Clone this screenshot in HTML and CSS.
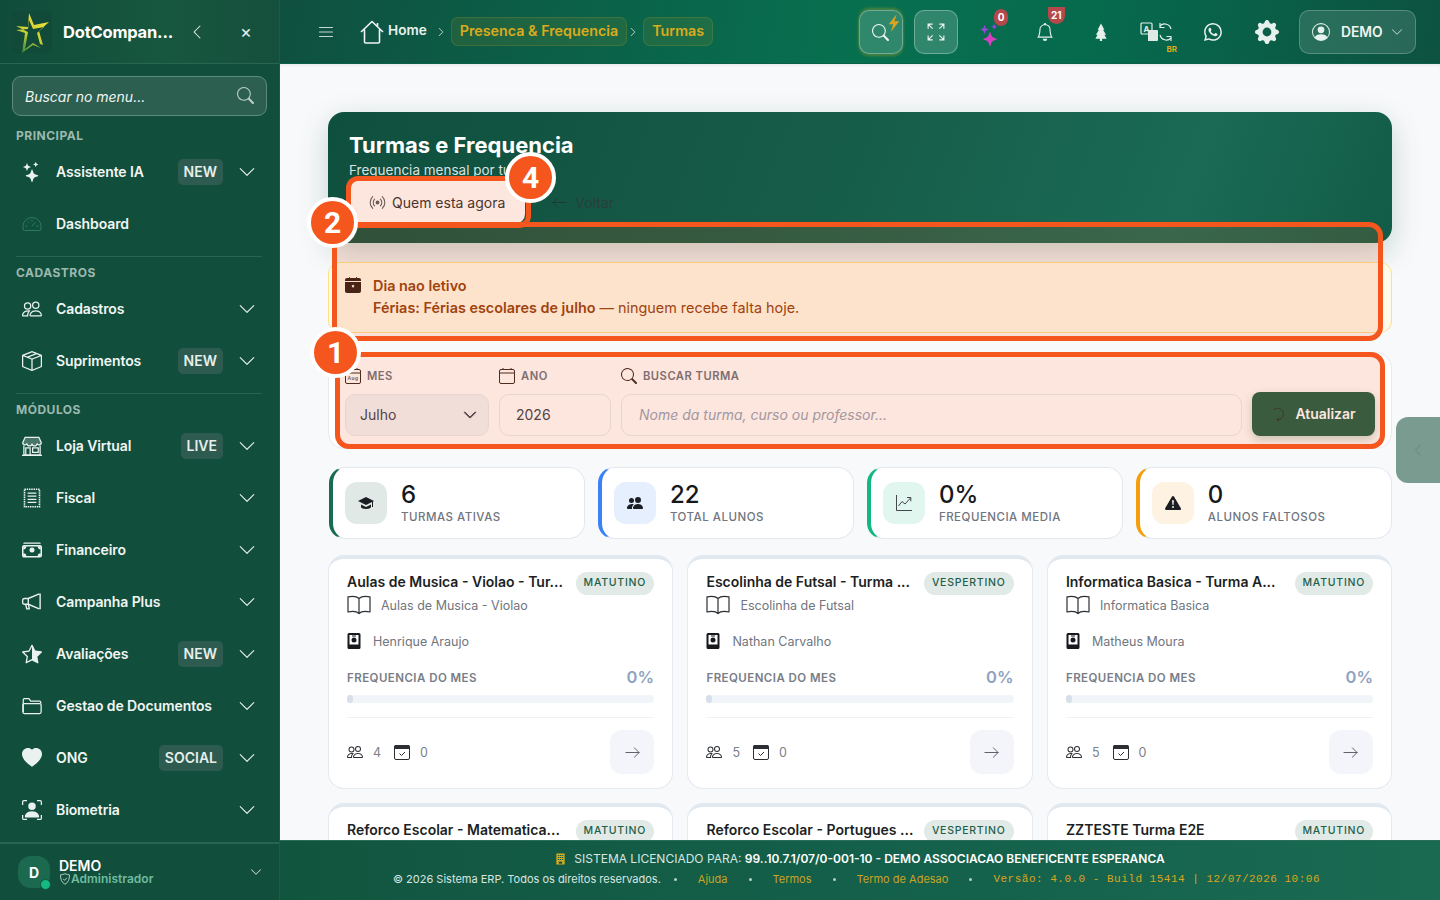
FILE: index.html
```html
<!DOCTYPE html>
<html lang="pt-BR">
<head>
<meta charset="utf-8">
<title>Turmas e Frequencia</title>
<link rel="stylesheet" href="styles.css">
</head>
<body>
<svg class="defs" aria-hidden="true">
  <defs>
    <linearGradient id="lg" x1="0.7" y1="0" x2="0.2" y2="1"><stop offset="0" stop-color="#f2e23a"/><stop offset="0.55" stop-color="#c8cf35"/><stop offset="1" stop-color="#2f8a3c"/></linearGradient>
  </defs>
  <symbol id="chev-d" viewBox="0 0 16 16"><path fill="currentColor" d="M1.646 4.646a.5.5 0 0 1 .708 0L8 10.293l5.646-5.647a.5.5 0 0 1 .708.708l-6 6a.5.5 0 0 1-.708 0l-6-6a.5.5 0 0 1 0-.708z"/></symbol>
  <symbol id="chev-l" viewBox="0 0 16 16"><path fill="currentColor" d="M11.354 1.646a.5.5 0 0 1 0 .708L5.707 8l5.647 5.646a.5.5 0 0 1-.708.708l-6-6a.5.5 0 0 1 0-.708l6-6a.5.5 0 0 1 .708 0z"/></symbol>
  <symbol id="chev-r" viewBox="0 0 16 16"><path fill="currentColor" d="M4.646 1.646a.5.5 0 0 1 .708 0l6 6a.5.5 0 0 1 0 .708l-6 6a.5.5 0 0 1-.708-.708L10.293 8 4.646 2.354a.5.5 0 0 1 0-.708z"/></symbol>
  <symbol id="search" viewBox="0 0 16 16"><path fill="currentColor" d="M11.742 10.344a6.5 6.5 0 1 0-1.397 1.398h-.001c.03.04.062.078.098.115l3.85 3.85a1 1 0 0 0 1.415-1.414l-3.85-3.85a1.007 1.007 0 0 0-.115-.1zM12 6.5a5.5 5.5 0 1 1-11 0 5.5 5.5 0 0 1 11 0z"/></symbol>
  <symbol id="stars" viewBox="0 0 16 16"><path fill="currentColor" d="M7.657 6.247c.11-.33.576-.33.686 0l.645 1.937a2.89 2.89 0 0 0 1.829 1.828l1.936.645c.33.11.33.576 0 .686l-1.937.645a2.89 2.89 0 0 0-1.828 1.829l-.645 1.936a.361.361 0 0 1-.686 0l-.645-1.937a2.89 2.89 0 0 0-1.828-1.828l-1.937-.645a.361.361 0 0 1 0-.686l1.937-.645a2.89 2.89 0 0 0 1.828-1.828l.645-1.937zM3.794 1.148a.217.217 0 0 1 .412 0l.387 1.162c.173.518.579.924 1.097 1.097l1.162.387a.217.217 0 0 1 0 .412l-1.162.387A1.734 1.734 0 0 0 4.593 5.69l-.387 1.162a.217.217 0 0 1-.412 0L3.407 5.69A1.734 1.734 0 0 0 2.31 4.593l-1.162-.387a.217.217 0 0 1 0-.412l1.162-.387A1.734 1.734 0 0 0 3.407 2.31l.387-1.162zM10.863.099a.145.145 0 0 1 .274 0l.258.774c.115.346.386.617.732.732l.774.258a.145.145 0 0 1 0 .274l-.774.258a1.156 1.156 0 0 0-.732.732l-.258.774a.145.145 0 0 1-.274 0l-.258-.774a1.156 1.156 0 0 0-.732-.732L9.1 2.137a.145.145 0 0 1 0-.274l.774-.258c.346-.115.617-.386.732-.732L10.863.1z"/></symbol>
  <symbol id="spark" viewBox="0 0 16 16"><path fill="#d63fc2" d="M7.657 6.247c.11-.33.576-.33.686 0l.645 1.937a2.89 2.89 0 0 0 1.829 1.828l1.936.645c.33.11.33.576 0 .686l-1.937.645a2.89 2.89 0 0 0-1.828 1.829l-.645 1.936a.361.361 0 0 1-.686 0l-.645-1.937a2.89 2.89 0 0 0-1.828-1.828l-1.937-.645a.361.361 0 0 1 0-.686l1.937-.645a2.89 2.89 0 0 0 1.828-1.828l.645-1.937z"/><path fill="#9a45dc" d="M3.794 1.148a.217.217 0 0 1 .412 0l.387 1.162c.173.518.579.924 1.097 1.097l1.162.387a.217.217 0 0 1 0 .412l-1.162.387A1.734 1.734 0 0 0 4.593 5.69l-.387 1.162a.217.217 0 0 1-.412 0L3.407 5.69A1.734 1.734 0 0 0 2.31 4.593l-1.162-.387a.217.217 0 0 1 0-.412l1.162-.387A1.734 1.734 0 0 0 3.407 2.31l.387-1.162zM10.863.099a.145.145 0 0 1 .274 0l.258.774c.115.346.386.617.732.732l.774.258a.145.145 0 0 1 0 .274l-.774.258a1.156 1.156 0 0 0-.732.732l-.258.774a.145.145 0 0 1-.274 0l-.258-.774a1.156 1.156 0 0 0-.732-.732L9.1 2.137a.145.145 0 0 1 0-.274l.774-.258c.346-.115.617-.386.732-.732L10.863.1z"/></symbol>
  <symbol id="speed" viewBox="0 0 20 16"><g fill="none" stroke="currentColor" stroke-width="1"><path d="M2.5 14.5h15a1.5 1.5 0 0 0 1.5-1.500V10a9 8.500 0 0 0-18 0v3a1.500 1.500 0 0 0 1.500 1.500z"/><path d="M10 10l3.500-4M3.500 10h2M14.500 10h2M10 3.500v2M5.500 5.500l1.200 1.200"/></g></symbol>
  <symbol id="people" viewBox="0 0 16 16"><path fill="currentColor" d="M15 14s1 0 1-1-1-4-5-4-5 3-5 4 1 1 1 1h8Zm-7.978-1A.261.261 0 0 1 7 12.996c.001-.264.167-1.03.76-1.72C8.312 10.629 9.282 10 11 10c1.717 0 2.687.63 3.24 1.276.593.69.758 1.457.76 1.72l-.008.002a.274.274 0 0 1-.014.002H7.022ZM11 7a2 2 0 1 0 0-4 2 2 0 0 0 0 4Zm3-2a3 3 0 1 1-6 0 3 3 0 0 1 6 0ZM6.936 9.28a5.88 5.88 0 0 0-1.23-.247A7.35 7.35 0 0 0 5 9c-4 0-5 3-5 4 0 .667.333 1 1 1h4.216A2.238 2.238 0 0 1 5 13c0-1.01.377-2.042 1.09-2.904.243-.294.526-.569.846-.816ZM4.92 10A5.493 5.493 0 0 0 4 13H1c0-.26.164-1.03.76-1.724.545-.636 1.492-1.256 3.16-1.275ZM1.5 5.500a3 3 0 1 1 6 0 3 3 0 0 1-6 0Zm3-2a2 2 0 1 0 0 4 2 2 0 0 0 0-4Z"/></symbol>
  <symbol id="people-fill" viewBox="0 0 16 16"><path fill="currentColor" d="M7 14s-1 0-1-1 1-4 5-4 5 3 5 4-1 1-1 1H7Zm4-6a3 3 0 1 0 0-6 3 3 0 0 0 0 6Zm-5.784 6A2.238 2.238 0 0 1 5 13c0-1.355.68-2.750 1.936-3.720A6.325 6.325 0 0 0 5 9c-4 0-5 3-5 4s1 1 1 1h4.216ZM4.500 8a2.500 2.500 0 1 0 0-5 2.500 2.500 0 0 0 0 5Z"/></symbol>
  <symbol id="box" viewBox="0 0 16 16"><path fill="currentColor" d="M8.186 1.113a.5.5 0 0 0-.372 0L1.846 3.5l2.404.961L10.404 2l-2.218-.887zm3.564 1.426L5.596 5 8 5.961 14.154 3.5l-2.404-.961zm3.250 1.700-6.500 2.600v7.922l6.500-2.600V4.240zM7.5 14.762V6.838L1 4.239v7.925l6.500 2.600zM7.443.184a1.500 1.500 0 0 1 1.114 0l7.129 2.852A.5.5 0 0 1 16 3.500v8.662a1 1 0 0 1-.629.928l-7.185 2.874a.5.5 0 0 1-.372 0L.63 13.090a1 1 0 0 1-.63-.928V3.500a.5.5 0 0 1 .314-.464L7.443.184z"/></symbol>
  <symbol id="shop" viewBox="0 0 16 16"><g fill="none" stroke="currentColor" stroke-width="1"><path d="M2.500 1h11l2 4.500a1.800 1.800 0 0 1-3.500.400 2 2 0 0 1-4 0 2 2 0 0 1-4 0 1.800 1.800 0 0 1-3.500-.400z" fill="currentColor" fill-opacity=".25"/><path d="M1.500 7.500V15h13V7.500M0 15.500h16"/><path d="M3 15V9.500h3.500V15M8.500 9.500h4.500v3.500H8.500z"/></g></symbol>
  <symbol id="receipt" viewBox="0 0 16 16"><g fill="none" stroke="currentColor"><path d="M2 1h12v14H2z" stroke-width="1.300" stroke-dasharray="1.200 .6"/><path d="M4.500 4h7M4.500 6.500h7M4.500 9h7M4.500 11.500h7" stroke-width="1"/></g></symbol>
  <symbol id="cash" viewBox="0 0 16 16"><path fill="currentColor" d="M1 3a1 1 0 0 1 1-1h12a1 1 0 0 1 1 1H1zM8 10a2 2 0 1 0 0-4 2 2 0 0 0 0 4z"/><rect x=".6" y="4.600" width="14.800" height="8.800" rx="1" fill="none" stroke="currentColor" stroke-width="1.200"/><path fill="currentColor" d="M1 5h2.500A2.500 2.500 0 0 1 1 7.500zM15 5h-2.500A2.500 2.500 0 0 0 15 7.500zM1 13h2.500A2.500 2.500 0 0 0 1 10.500zM15 13h-2.500a2.500 2.500 0 0 1 2.500-2.500z"/></symbol>
  <symbol id="mega" viewBox="0 0 16 16"><g fill="none" stroke="currentColor" stroke-width="1.100" stroke-linejoin="round"><path d="M14.500 1.200v12.600M13.800 1.500 5 5.200H2a1.500 1.500 0 0 0-1.500 1.500v1.600A1.500 1.500 0 0 0 2 9.800h3l8.800 3.700"/><path d="M5 5.200v4.600M3 10l.8 3.500h2L5.200 10.200"/></g></symbol>
  <symbol id="star-half" viewBox="0 0 16 16"><path fill="currentColor" d="M5.354 5.119 7.538.792A.516.516 0 0 1 8 .5c.183 0 .366.097.465.292l2.184 4.327 4.898.696A.537.537 0 0 1 16 6.320a.548.548 0 0 1-.17.445l-3.523 3.356.83 4.730c.078.443-.36.79-.746.592L8 13.187l-4.389 2.256a.52.52 0 0 1-.146.05c-.342.06-.668-.254-.6-.642l.83-4.730L.173 6.765a.55.55 0 0 1-.172-.403.58.58 0 0 1 .085-.302.513.513 0 0 1 .37-.245l4.898-.696zM8 12.027a.5.5 0 0 1 .232.056l3.686 1.894-.694-3.957a.565.565 0 0 1 .162-.505l2.907-2.770-4.052-.576a.525.525 0 0 1-.393-.288L8.001 2.223 8 2.226v9.800z" transform="matrix(-1 0 0 1 16 0)"/></symbol>
  <symbol id="folder" viewBox="0 0 16 16"><g fill="none" stroke="currentColor" stroke-width="1"><path d="M1 13V3a1 1 0 0 1 1-1h3.500l1.500 2h7a1 1 0 0 1 1 1v1"/><rect x=".7" y="6" width="14.600" height="8" rx="1.200"/></g></symbol>
  <symbol id="heart" viewBox="0 0 16 16"><path fill="currentColor" d="M8 1.314C12.438-3.248 23.534 4.735 8 15-7.534 4.736 3.562-3.248 8 1.314z"/></symbol>
  <symbol id="bio" viewBox="0 0 16 16"><path fill="none" stroke="currentColor" stroke-width="1" d="M.5 4V1.500a1 1 0 0 1 1-1H4M12 .5h2.500a1 1 0 0 1 1 1V4M15.500 12v2.500a1 1 0 0 1-1 1H12M4 15.500H1.500a1 1 0 0 1-1-1V12"/><path fill="currentColor" d="M8 8a3 3 0 1 0 0-6 3 3 0 0 0 0 6zM2.800 14s-.5 0-.5-1 1.500-4 5.700-4 5.700 3 5.700 4-.5 1-.5 1z"/></symbol>
  <symbol id="shield" viewBox="0 0 16 16"><g fill="none" stroke="currentColor" stroke-width="1.100"><path d="M8 1C6 1.800 4 2.300 2 2.500c0 6 1.500 10 6 12.500 4.500-2.500 6-6.500 6-12.500-2-.2-4-.7-6-1.500z"/><path d="m5.500 7.800 2 2 3-3.500"/></g></symbol>
  <symbol id="list" viewBox="0 0 16 16"><path fill="none" stroke="currentColor" stroke-width="1.100" stroke-linecap="round" d="M1.500 3.500h13M1.500 8h13M1.500 12.500h13"/></symbol>
  <symbol id="house" viewBox="0 0 24 24"><path fill="none" stroke="currentColor" stroke-width="1.600" stroke-linejoin="round" d="M1 12 12 1.500 23 12M4.500 9.500V22a1 1 0 0 0 1 1h13a1 1 0 0 0 1-1V9.500M17.500 3v3"/></symbol>
  <symbol id="bolt" viewBox="0 0 16 20"><path fill="currentColor" d="M11 0 2 11.500h5L4.500 20 14 8H8.500z"/></symbol>
  <symbol id="expand" viewBox="0 0 16 16"><path fill="none" stroke="currentColor" stroke-width="1" d="M1 5V1h4M1 1l4 4M11 1h4v4M15 1l-4 4M1 11v4h4M1 15l4-4M15 11v4h-4M15 15l-4-4"/></symbol>
  <symbol id="bell" viewBox="0 0 16 16"><path fill="currentColor" d="M8 16a2 2 0 0 0 2-2H6a2 2 0 0 0 2 2zM8 1.918l-.797.161A4.002 4.002 0 0 0 4 6c0 .628-.134 2.197-.459 3.742-.16.767-.376 1.566-.663 2.258h10.244c-.287-.692-.502-1.490-.663-2.258C12.134 8.197 12 6.628 12 6a4.002 4.002 0 0 0-3.203-3.920L8 1.917zM14.220 12c.223.447.481.801.78 1H1c.299-.199.557-.553.78-1C2.680 10.200 3 6.880 3 6c0-2.420 1.720-4.440 4.005-4.901a1 1 0 1 1 1.990 0A5.002 5.002 0 0 1 13 6c0 .88.32 4.200 1.220 6z"/></symbol>
  <symbol id="tree" viewBox="0 0 16 16"><path fill="currentColor" d="M8 .5 11 6H9.800l2.700 4.500H11l2 3.500H9v2H7v-2H3l2-3.500H3.500L6.200 6H5z"/></symbol>
  <symbol id="whatsapp" viewBox="0 0 16 16"><path fill="currentColor" d="M13.601 2.326A7.854 7.854 0 0 0 7.994 0C3.627 0 .068 3.558.064 7.926c0 1.399.366 2.760 1.057 3.965L0 16l4.204-1.102a7.933 7.933 0 0 0 3.790.965h.004c4.368 0 7.926-3.558 7.930-7.930A7.898 7.898 0 0 0 13.600 2.326zM7.994 14.521a6.573 6.573 0 0 1-3.356-.920l-.24-.144-2.494.654.666-2.433-.156-.251a6.560 6.560 0 0 1-1.007-3.505c0-3.626 2.957-6.584 6.591-6.584a6.560 6.560 0 0 1 4.660 1.931 6.557 6.557 0 0 1 1.928 4.660c-.004 3.639-2.961 6.592-6.592 6.592zm3.615-4.934c-.197-.099-1.170-.578-1.353-.646-.182-.065-.315-.099-.445.099-.133.197-.513.646-.627.775-.114.133-.232.148-.43.05-.197-.1-.836-.308-1.592-.985-.59-.525-.985-1.175-1.103-1.372-.114-.198-.011-.304.088-.403.087-.088.197-.232.296-.346.1-.114.133-.198.198-.33.065-.134.034-.248-.015-.347-.05-.099-.445-1.076-.612-1.470-.16-.389-.323-.335-.445-.34-.114-.007-.247-.007-.38-.007a.729.729 0 0 0-.529.247c-.182.198-.691.677-.691 1.654 0 .977.71 1.916.81 2.049.098.133 1.394 2.132 3.383 2.992.47.205.84.326 1.129.418.475.152.904.129 1.246.08.38-.058 1.171-.48 1.338-.943.164-.464.164-.86.114-.943-.049-.084-.182-.133-.38-.232z"/></symbol>
  <symbol id="gear" viewBox="0 0 16 16"><path fill="currentColor" d="M9.405 1.050c-.413-1.400-2.397-1.400-2.810 0l-.1.340a1.464 1.464 0 0 1-2.105.872l-.31-.17c-1.283-.698-2.686.705-1.987 1.987l.169.311c.446.820.023 1.841-.872 2.105l-.34.1c-1.400.413-1.400 2.397 0 2.810l.34.1a1.464 1.464 0 0 1 .872 2.105l-.17.31c-.698 1.283.705 2.686 1.987 1.987l.311-.169a1.464 1.464 0 0 1 2.105.872l.1.34c.413 1.400 2.397 1.400 2.810 0l.1-.34a1.464 1.464 0 0 1 2.105-.872l.31.17c1.283.698 2.686-.705 1.987-1.987l-.169-.311a1.464 1.464 0 0 1 .872-2.105l.34-.1c1.400-.413 1.400-2.397 0-2.810l-.34-.1a1.464 1.464 0 0 1-.872-2.105l.17-.31c.698-1.283-.705-2.686-1.987-1.987l-.311.169a1.464 1.464 0 0 1-2.105-.872l-.1-.34zM8 10.930a2.929 2.929 0 1 1 0-5.860 2.929 2.929 0 0 1 0 5.858z"/></symbol>
  <symbol id="person-c" viewBox="0 0 16 16"><path fill="currentColor" d="M11 6a3 3 0 1 1-6 0 3 3 0 0 1 6 0z"/><path fill="currentColor" d="M0 8a8 8 0 1 1 16 0A8 8 0 0 1 0 8zm8-7a7 7 0 0 0-5.468 11.370C3.242 11.226 4.805 10 8 10s4.757 1.225 5.468 2.370A7 7 0 0 0 8 1z"/></symbol>
  <symbol id="broadcast" viewBox="0 0 16 16"><g fill="none" stroke="currentColor" stroke-width="1" stroke-linecap="round"><path d="M3.500 2.500a7.500 7.500 0 0 0 0 11M12.500 2.500a7.500 7.500 0 0 1 0 11M5.300 4.800a4.500 4.500 0 0 0 0 6.400M10.700 4.800a4.500 4.500 0 0 1 0 6.400"/></g><circle cx="8" cy="8" r="1.800" fill="currentColor"/></symbol>
  <symbol id="arrow-l" viewBox="0 0 16 16"><path fill="none" stroke="currentColor" stroke-width="1" stroke-linecap="round" stroke-linejoin="round" d="M15 8H1M6 3 1 8l5 5"/></symbol>
  <symbol id="arrow-r" viewBox="0 0 16 16"><path fill="none" stroke="currentColor" stroke-width="1" stroke-linecap="round" stroke-linejoin="round" d="M1 8h14M10 3l5 5-5 5"/></symbol>
  <symbol id="cal-x" viewBox="0 0 16 16"><path fill="currentColor" d="M4 .5a.5.5 0 0 1 1 0V1h6V.5a.5.5 0 0 1 1 0V1h2a2 2 0 0 1 2 2v1H0V3a2 2 0 0 1 2-2h2zM16 14V5H0v9a2 2 0 0 0 2 2h12a2 2 0 0 0 2-2zM6.600 8.500l.7-.7L8 8.500l.7-.7.7.7-.7.7.7.7-.7.7-.7-.7-.7.7-.7-.7.7-.7z"/></symbol>
  <symbol id="calendar" viewBox="0 0 16 16"><g fill="none" stroke="currentColor" stroke-width="1"><rect x=".5" y="1.500" width="15" height="14" rx="1.500"/><path d="M.5 5h15M4 0v2M12 0v2"/></g></symbol>
  <symbol id="cal-check" viewBox="0 0 16 16"><g fill="none" stroke="currentColor" stroke-width="1"><rect x=".5" y="1.500" width="15" height="14" rx="1.500"/><path d="m5.500 9.500 2 2 3.500-3.500"/></g><path fill="currentColor" d="M0 3a2 2 0 0 1 2-2h12a2 2 0 0 1 2 2v2H0z"/></symbol>
  <symbol id="spin" viewBox="0 0 16 16"><path fill="none" stroke="currentColor" stroke-width="1" d="M3 3.500A6.500 6.500 0 1 1 7 14.500"/><path fill="currentColor" d="M9 12.500v4L6 14.500z"/></symbol>
  <symbol id="cap" viewBox="0 0 16 16"><path fill="currentColor" d="M8 2 0 6l8 4 6-3v5h1V6.500l1-.5zM3 9.500V12c0 1 2.500 2 5 2s5-1 5-2V9.500L8 12z"/></symbol>
  <symbol id="graph" viewBox="0 0 16 16"><path fill="none" stroke="currentColor" stroke-width=".8" d="M.5 0v15.500H16M2.500 11l3.500-4.500 3 2.500L14.500 3M11 2.500h3.800v3.800"/></symbol>
  <symbol id="warn" viewBox="0 0 16 16"><path fill="currentColor" d="M8.982 1.566a1.130 1.130 0 0 0-1.960 0L.165 13.233c-.457.778.091 1.767.98 1.767h13.713c.889 0 1.438-.99.98-1.767L8.982 1.566zM8 5c.535 0 .954.462.9.995l-.35 3.507a.552.552 0 0 1-1.100 0L7.100 5.995A.905.905 0 0 1 8 5zm.002 6a1 1 0 1 1 0 2 1 1 0 0 1 0-2z"/></symbol>
  <symbol id="book" viewBox="0 0 24 20"><path fill="none" stroke="currentColor" stroke-width="1.200" stroke-linejoin="round" d="M12 3.500C10 1.500 5 1 1 1.800V17c4-.8 9-.5 11 1.500 2-2 7-2.300 11-1.500V1.800C19 1 14 1.500 12 3.500zM12 3.500v15"/></symbol>
  <symbol id="badge-id" viewBox="1.500 0 13 16"><path fill="currentColor" fill-rule="evenodd" d="M3 0h10a1.500 1.500 0 0 1 1.500 1.500v13A1.500 1.500 0 0 1 13 16H3a1.500 1.500 0 0 1-1.500-1.500v-13A1.500 1.500 0 0 1 3 0zm.500 2v9.500h9V2z"/><circle cx="8" cy="7" r="2.500" fill="currentColor"/><path fill="currentColor" d="M6 2.500h4v1H6z"/></symbol>
  <symbol id="building" viewBox="0 0 16 16"><path fill="currentColor" fill-rule="evenodd" d="M2 0h12v16H2zm2 2v1.500h2V2zm3 0v1.500h2V2zm3 0v1.500h2V2zM4 5v1.500h2V5zm3 0v1.500h2V5zm3 0v1.500h2V5zM4 8v1.500h2V8zm3 0v1.500h2V8zm3 0v1.500h2V8zM5.500 11.500V15h5v-3.500z"/></symbol>
</svg>

<div class="app">
  <aside class="sidebar">
    <div class="side-head">
      <svg class="logo" viewBox="0 0 40 42"><rect width="40" height="42" rx="5" fill="#114a39"/><path fill="url(#lg)" d="M17 2l5 12 15-3-10 9 4 14-3-1-3-11 7-6-11 2-4-9-1 9-12 1 9 3-3 20 11-8 8 3-8-5-8 6 3-17-12-6 12 1z"/></svg>
      <span class="brand">DotCompan...</span>
      <svg class="head-chev"><use href="#chev-l"/></svg>
      <span class="head-x">×</span>
    </div>
    <div class="side-search">
      <span>Buscar no menu...</span>
      <svg class="ss-ico"><use href="#search"/></svg>
    </div>
    <nav class="nav">
      <div class="nav-label">PRINCIPAL</div>
      <a class="nav-item"><svg class="nav-ico"><use href="#stars"/></svg><span class="nav-text">Assistente IA</span><span class="tag">NEW</span><svg class="nav-chev"><use href="#chev-d"/></svg></a>
      <a class="nav-item"><svg class="nav-ico dim"><use href="#speed"/></svg><span class="nav-text">Dashboard</span></a>
      <div class="nav-div"></div>
      <div class="nav-label">CADASTROS</div>
      <a class="nav-item"><svg class="nav-ico"><use href="#people"/></svg><span class="nav-text">Cadastros</span><svg class="nav-chev"><use href="#chev-d"/></svg></a>
      <a class="nav-item"><svg class="nav-ico"><use href="#box"/></svg><span class="nav-text">Suprimentos</span><span class="tag">NEW</span><svg class="nav-chev"><use href="#chev-d"/></svg></a>
      <div class="nav-div"></div>
      <div class="nav-label">MÓDULOS</div>
      <a class="nav-item"><svg class="nav-ico"><use href="#shop"/></svg><span class="nav-text">Loja Virtual</span><span class="tag">LIVE</span><svg class="nav-chev"><use href="#chev-d"/></svg></a>
      <a class="nav-item"><svg class="nav-ico"><use href="#receipt"/></svg><span class="nav-text">Fiscal</span><svg class="nav-chev"><use href="#chev-d"/></svg></a>
      <a class="nav-item"><svg class="nav-ico"><use href="#cash"/></svg><span class="nav-text">Financeiro</span><svg class="nav-chev"><use href="#chev-d"/></svg></a>
      <a class="nav-item"><svg class="nav-ico"><use href="#mega"/></svg><span class="nav-text">Campanha Plus</span><svg class="nav-chev"><use href="#chev-d"/></svg></a>
      <a class="nav-item"><svg class="nav-ico"><use href="#star-half"/></svg><span class="nav-text">Avaliações</span><span class="tag">NEW</span><svg class="nav-chev"><use href="#chev-d"/></svg></a>
      <a class="nav-item"><svg class="nav-ico"><use href="#folder"/></svg><span class="nav-text">Gestao de Documentos</span><svg class="nav-chev"><use href="#chev-d"/></svg></a>
      <a class="nav-item"><svg class="nav-ico"><use href="#heart"/></svg><span class="nav-text">ONG</span><span class="tag">SOCIAL</span><svg class="nav-chev"><use href="#chev-d"/></svg></a>
      <a class="nav-item"><svg class="nav-ico"><use href="#bio"/></svg><span class="nav-text">Biometria</span><svg class="nav-chev"><use href="#chev-d"/></svg></a>
    </nav>
    <div class="side-user">
      <div class="avatar">D<span class="online"></span></div>
      <div class="user-info">
        <div class="user-name">DEMO</div>
        <div class="user-role"><svg class="role-ico"><use href="#shield"/></svg>Administrador</div>
      </div>
      <svg class="user-chev"><use href="#chev-d"/></svg>
    </div>
  </aside>

  <div class="column">
    <header class="topbar">
      <svg class="burger"><use href="#list"/></svg>
      <svg class="home-ico"><use href="#house"/></svg>
      <span class="crumb-home">Home</span>
      <svg class="crumb-sep first"><use href="#chev-r"/></svg>
      <span class="chip">Presenca &amp; Frequencia</span>
      <svg class="crumb-sep"><use href="#chev-r"/></svg>
      <span class="chip">Turmas</span>
      <div class="top-actions">
        <div class="tbtn glass glow"><svg class="t-search"><use href="#search"/></svg><svg class="t-bolt"><use href="#bolt"/></svg></div>
        <div class="tbtn glass"><svg class="t-exp"><use href="#expand"/></svg></div>
        <div class="tbtn"><svg class="t-spark"><use href="#spark"/></svg><span class="count c-a">0</span></div>
        <div class="tbtn"><svg class="t-ico t-bell"><use href="#bell"/></svg><span class="count c-b">21</span></div>
        <div class="tbtn"><svg class="t-ico"><use href="#tree"/></svg></div>
        <div class="tbtn">
          <svg class="t-trans" viewBox="0 0 32 20">
            <rect x="1" y="1" width="11" height="11" rx="1" class="tr-line"/>
            <text x="6.500" y="9.500" class="tr-a">A</text>
            <path d="M8 8h9a1 1 0 0 1 1 1v9a1 1 0 0 1-1 1H8z" class="tr-fill"/>
            <path d="M31 7a6.500 6.500 0 0 0-11-3M20 13a6.500 6.500 0 0 0 11 3" class="tr-line"/>
            <path d="M20 1v4.500h4.500M31 19v-4.500h-4.500" class="tr-line"/>
          </svg>
          <span class="lang">BR</span>
        </div>
        <div class="tbtn"><svg class="t-ico t-wa"><use href="#whatsapp"/></svg></div>
        <div class="tbtn"><svg class="t-gear"><use href="#gear"/></svg></div>
        <div class="user-btn"><svg class="t-ico"><use href="#person-c"/></svg><span>DEMO</span><svg class="ub-chev"><use href="#chev-d"/></svg></div>
      </div>
    </header>

    <main class="content">
      <section class="hero">
        <h1 class="hero-title">Turmas e Frequencia</h1>
        <p class="hero-sub">Frequencia mensal por turma</p>
        <div class="hero-actions">
          <button class="btn-live"><svg class="bl-ico"><use href="#broadcast"/></svg>Quem esta agora</button>
          <button class="btn-back"><svg class="bb-ico"><use href="#arrow-l"/></svg>Voltar</button>
        </div>
      </section>

      <section class="alert">
        <svg class="alert-ico"><use href="#cal-x"/></svg>
        <div class="alert-text">
          <div class="alert-title">Dia nao letivo</div>
          <div class="alert-body"><strong>Férias: Férias escolares de julho</strong> — ninguem recebe falta hoje.</div>
        </div>
      </section>

      <section class="filters">
        <div class="field f-mes">
          <div class="f-label"><svg class="f-ico" viewBox="0 0 16 16"><use href="#calendar"/><text x="8" y="12" class="aug">Aug</text></svg>MES</div>
          <div class="control select">Julho<svg class="sel-chev"><use href="#chev-d"/></svg></div>
        </div>
        <div class="field f-ano">
          <div class="f-label"><svg class="f-ico"><use href="#calendar"/></svg>ANO</div>
          <div class="control year">2026</div>
        </div>
        <div class="field f-busca">
          <div class="f-label"><svg class="f-ico"><use href="#search"/></svg>BUSCAR TURMA</div>
          <div class="control placeholder">Nome da turma, curso ou professor...</div>
        </div>
        <button class="btn-update"><svg class="upd-ico"><use href="#spin"/></svg>Atualizar</button>
      </section>

      <section class="stats">
        <div class="stat s-green"><div class="stat-ico"><svg><use href="#cap"/></svg></div><div><div class="stat-val">6</div><div class="stat-lbl">TURMAS ATIVAS</div></div></div>
        <div class="stat s-blue"><div class="stat-ico"><svg><use href="#people-fill"/></svg></div><div><div class="stat-val">22</div><div class="stat-lbl">TOTAL ALUNOS</div></div></div>
        <div class="stat s-mint"><div class="stat-ico"><svg><use href="#graph"/></svg></div><div><div class="stat-val">0%</div><div class="stat-lbl">FREQUENCIA MEDIA</div></div></div>
        <div class="stat s-amber"><div class="stat-ico"><svg><use href="#warn"/></svg></div><div><div class="stat-val">0</div><div class="stat-lbl">ALUNOS FALTOSOS</div></div></div>
      </section>

      <section class="cards">
        <article class="card">
          <div class="card-head"><h3 class="card-title">Aulas de Musica - Violao - Tur...</h3><span class="shift">MATUTINO</span></div>
          <div class="card-course"><svg class="book"><use href="#book"/></svg>Aulas de Musica - Violao</div>
          <div class="card-teacher"><svg class="tch"><use href="#badge-id"/></svg>Henrique Araujo</div>
          <div class="freq"><span class="freq-lbl">FREQUENCIA DO MES</span><span class="freq-val">0%</span></div>
          <div class="bar"><div class="bar-fill"></div></div>
          <div class="card-foot"><svg class="cf-ico"><use href="#people"/></svg><span class="cf-num">4</span><svg class="cf-ico"><use href="#cal-check"/></svg><span class="cf-num">0</span><span class="go"><svg class="go-ico"><use href="#arrow-r"/></svg></span></div>
        </article>
        <article class="card">
          <div class="card-head"><h3 class="card-title">Escolinha de Futsal - Turma ...</h3><span class="shift">VESPERTINO</span></div>
          <div class="card-course"><svg class="book"><use href="#book"/></svg>Escolinha de Futsal</div>
          <div class="card-teacher"><svg class="tch"><use href="#badge-id"/></svg>Nathan Carvalho</div>
          <div class="freq"><span class="freq-lbl">FREQUENCIA DO MES</span><span class="freq-val">0%</span></div>
          <div class="bar"><div class="bar-fill"></div></div>
          <div class="card-foot"><svg class="cf-ico"><use href="#people"/></svg><span class="cf-num">5</span><svg class="cf-ico"><use href="#cal-check"/></svg><span class="cf-num">0</span><span class="go"><svg class="go-ico"><use href="#arrow-r"/></svg></span></div>
        </article>
        <article class="card">
          <div class="card-head"><h3 class="card-title">Informatica Basica - Turma A...</h3><span class="shift">MATUTINO</span></div>
          <div class="card-course"><svg class="book"><use href="#book"/></svg>Informatica Basica</div>
          <div class="card-teacher"><svg class="tch"><use href="#badge-id"/></svg>Matheus Moura</div>
          <div class="freq"><span class="freq-lbl">FREQUENCIA DO MES</span><span class="freq-val">0%</span></div>
          <div class="bar"><div class="bar-fill"></div></div>
          <div class="card-foot"><svg class="cf-ico"><use href="#people"/></svg><span class="cf-num">5</span><svg class="cf-ico"><use href="#cal-check"/></svg><span class="cf-num">0</span><span class="go"><svg class="go-ico"><use href="#arrow-r"/></svg></span></div>
        </article>
        <article class="card">
          <div class="card-head"><h3 class="card-title">Reforco Escolar - Matematica...</h3><span class="shift">MATUTINO</span></div>
        </article>
        <article class="card">
          <div class="card-head"><h3 class="card-title">Reforco Escolar - Portugues ...</h3><span class="shift">VESPERTINO</span></div>
        </article>
        <article class="card">
          <div class="card-head"><h3 class="card-title">ZZTESTE Turma E2E</h3><span class="shift">MATUTINO</span></div>
        </article>
      </section>
    </main>

    <footer class="footer">
      <div class="foot-1"><svg class="foot-ico"><use href="#building"/></svg><span>SISTEMA LICENCIADO PARA: <strong>99..10.7.1/07/0-001-10 - DEMO ASSOCIACAO BENEFICENTE ESPERANCA</strong></span></div>
      <div class="foot-2">
        <span class="copy">© 2026 Sistema ERP. Todos os direitos reservados.</span><i class="dot"></i>
        <a>Ajuda</a><i class="dot"></i>
        <a>Termos</a><i class="dot"></i>
        <a>Termo de Adesao</a><i class="dot"></i>
        <span class="version">Versão: 4.0.0 - Build 15414 | 12/07/2026 10:06</span>
      </div>
    </footer>
  </div>

  <div class="edge-tab"><svg class="edge-chev"><use href="#chev-l"/></svg></div>

  <div class="hl hl-alert"></div>
  <div class="hl hl-filter"></div>
  <div class="hl hl-live"></div>
  <div class="pin pin-1">1</div>
  <div class="pin pin-2">2</div>
  <div class="pin pin-4">4</div>
</div>
</body>
</html>
```

FILE: styles.css
```css
* { box-sizing: border-box; }
html, body { margin: 0; padding: 0; height: 100%; }
body { font-family: Inter, "Noto Sans", sans-serif; color: #1a1d21; background: #f8f9fb; overflow: hidden; }
.defs { position: absolute; width: 0; height: 0; overflow: hidden; }
svg { display: block; flex: none; }
h1, h3, p { margin: 0; }
button { font-family: inherit; border: 0; cursor: pointer; }

.app { position: relative; display: flex; width: 1440px; height: 900px; overflow: hidden; }

/* Sidebar */
.sidebar { width: 280px; flex: none; display: flex; flex-direction: column; background: #124e3c; border-right: 1px solid #1f5a48; color: #eef5f2; }
.side-head { height: 64px; flex: none; display: flex; align-items: center; padding-left: 12px; border-bottom: 1px solid #2a6553; background: linear-gradient(90deg, #104c3a, #18573f 60%, #154f3d); }
.logo { width: 40px; height: 42px; }
.brand { margin-left: 11px; width: 114px; font-weight: 700; font-size: 16.5px; letter-spacing: -.2px; color: #fff; white-space: nowrap; }
.head-chev { width: 16px; height: 16px; margin-left: 12px; color: #e7efec; }
.head-x { margin-left: 35px; font-size: 18px; line-height: 18px; color: #e7efec; }
.side-search { margin: 12px 12px 0 12px; height: 40px; flex: none; display: flex; align-items: center; justify-content: space-between; padding: 0 12px; border-radius: 9px; border: 1px solid #5d8a7d; background: #2d5f50; font-size: 14px; font-style: italic; color: #eef5f2; }
.ss-ico { width: 17px; height: 17px; color: #b8cfc8; margin-bottom: 1px; }
.nav { flex: 1; display: flex; flex-direction: column; padding-top: 12px; min-height: 0; }
.nav-label { height: 16px; line-height: 16px; padding-left: 16px; margin-bottom: 2px; font-size: 12px; font-weight: 700; letter-spacing: .5px; color: #9cb9af; }
.nav-item { height: 52px; flex: none; display: flex; align-items: center; padding: 0 23px 0 22px; }
.nav-ico { width: 20px; height: 20px; margin-right: 14px; color: #eaf2ef; }
.nav-ico.dim { color: #2a7a60; }
.nav-text { flex: 1; font-size: 14px; font-weight: 600; letter-spacing: -.1px; color: #f0f6f3; white-space: nowrap; margin-bottom: 2px; }
.tag { height: 26px; line-height: 26px; padding: 0 6px; border-radius: 5px; background: #2d5b50; font-size: 14px; font-weight: 600; color: #e6efec; margin-right: 15px; }
.nav-chev { width: 18px; height: 18px; color: #e6efec; margin-left: auto; }
.tag + .nav-chev { margin-left: 0; }
.nav-div { height: 1px; margin: 6px 17px 8px 16px; background: #2b6454; flex: none; }
.side-user { height: 58px; flex: none; display: flex; align-items: center; padding: 0 17px 0 18px; border-top: 2px solid #2a6553; }
.avatar { position: relative; width: 32px; height: 32px; border-radius: 13px; background: #1b6a50; display: flex; align-items: center; justify-content: center; font-size: 14px; font-weight: 700; color: #fff; }
.online { position: absolute; right: -1px; bottom: -2px; width: 9px; height: 9px; border-radius: 50%; background: #13b981; border: 1px solid #124e3c; box-sizing: content-box; }
.user-info { margin-left: 9px; flex: 1; }
.user-name { font-size: 14px; font-weight: 600; line-height: 13px; color: #fff; }
.user-role { display: flex; align-items: center; font-size: 12px; font-weight: 600; line-height: 13px; color: #6fbb9f; }
.role-ico { width: 12px; height: 12px; color: #cfe3db; }
.user-chev { width: 12px; height: 12px; color: #d8e6e1; }

/* Column */
.column { flex: 1; min-width: 0; display: flex; flex-direction: column; height: 900px; }

/* Topbar */
.topbar { height: 64px; flex: none; display: flex; align-items: center; padding: 0 24px 0 38px; background: linear-gradient(100deg, #0f5040 0%, #07704f 50%, #066a4d 70%, #0d5240 100%); border-bottom: 1px solid #0b6048; color: #e8f1ee; }
.burger { width: 16px; height: 16px; color: #c5d9d2; }
.home-ico { width: 24px; height: 24px; margin-left: 26px; color: #f0f6f3; }
.crumb-home { margin-left: 4px; font-size: 13.6px; font-weight: 600; color: #eaf2ef; position: relative; top: -2px; }
.crumb-sep { width: 10px; height: 10px; color: #c8dad3; margin: 0 5px 0 1px; }
.crumb-sep.first { margin: 0 5px 0 9px; }
.chip { height: 29px; line-height: 26px; padding: 0 8px; border: 1px solid rgba(212,169,31,.18); border-radius: 7px; background: rgba(212,169,31,.1); font-size: 14.3px; font-weight: 600; color: #d9ab1d; white-space: nowrap; }
.top-actions { margin-left: auto; display: flex; align-items: center; gap: 11px; }
.tbtn { position: relative; width: 44px; height: 44px; display: flex; align-items: center; justify-content: center; }
.glass { border-radius: 10px; border: 1px solid rgba(255,255,255,.3); background: rgba(255,255,255,.17); }
.glow { box-shadow: 0 -2px 3px rgba(212,169,31,.35), 0 2px 3px rgba(212,169,31,.35); }
.t-search { width: 17px; height: 17px; color: #eef5f2; margin: 2px 2px 0 0; }
.t-bolt { position: absolute; right: 1px; top: 3px; width: 14px; height: 18px; color: #d9a520; }
.t-exp { width: 18px; height: 18px; color: #eef5f2; }
.t-spark { width: 22px; height: 22px; margin: 6px 2px 0 0; }
.t-ico { width: 18px; height: 18px; color: #e6f0ec; }
.t-bell { margin-right: 2px; }
.t-wa { margin-left: 3px; }
.t-gear { width: 24px; height: 24px; margin-left: 1px; color: #e6f0ec; }
.t-trans { width: 32px; height: 20px; color: #e6f0ec; }
.tr-line { fill: none; stroke: currentColor; stroke-width: 1.2; }
.tr-fill { fill: #dfeae6; }
.tr-a { font-size: 8px; font-weight: 700; font-family: Inter, sans-serif; fill: currentColor; text-anchor: middle; }
.count { position: absolute; height: 17px; min-width: 14px; padding: 0 3px; line-height: 17px; border-radius: 9px; text-align: center; font-size: 10px; font-weight: 700; color: #fff; background: #b5484b; }
.c-a { left: 25px; top: -1px; }
.c-b { left: 24px; top: -3px; border-radius: 0 0 9px 9px; }
.lang { position: absolute; right: 1px; bottom: 0; font-size: 8px; font-weight: 700; color: #d9ab1d; line-height: 10px; }
.user-btn { width: 117px; height: 44px; display: flex; align-items: center; padding: 0 12px; border-radius: 10px; border: 1px solid rgba(255,255,255,.22); background: rgba(255,255,255,.12); font-size: 13.8px; font-weight: 600; color: #eef5f2; }
.user-btn span { margin-left: 11px; }
.ub-chev { width: 12px; height: 12px; margin-left: auto; color: #c8dad3; }

/* Content */
.content { flex: 1; min-height: 0; overflow: hidden; padding: 48px 48px 0; background: #f8f9fb; box-shadow: inset 0 3px 4px -3px rgba(0,0,0,.12); }
.hero { height: 131px; padding: 18px 21px; border-radius: 16px; background: linear-gradient(110deg, #0f4f3e, #165c48 45%, #1a6a55 80%, #125c47); box-shadow: 0 10px 30px rgba(15,80,60,.22); color: #fff; }
.hero-title { font-size: 22px; line-height: 30px; font-weight: 700; letter-spacing: 0; }
.hero-sub { font-size: 13.5px; line-height: 20px; color: rgba(255,255,255,.85); white-space: nowrap; }
.hero-actions { display: flex; gap: 7px; }
.btn-live { height: 44px; display: flex; align-items: center; padding: 0 20px; border-radius: 10px; background: #fff; font-size: 14px; color: #2c2f33; }
.bl-ico { width: 17px; height: 17px; margin-right: 6px; color: #565a5f; }
.btn-back { height: 44px; display: flex; align-items: center; padding: 0 20px; background: transparent; font-size: 14px; color: #2a3f3a; }
.bb-ico { width: 15px; height: 15px; margin-right: 8px; color: #223733; }

.alert { height: 71px; margin-top: 19px; display: flex; padding: 14px 16px; border: 1px solid #fde08a; border-radius: 12px; background: #fffbeb; color: #92400e; }
.alert-ico { width: 16px; height: 16px; color: #2c1a15; margin-right: 12px; }
.alert-title { font-size: 14.4px; font-weight: 600; line-height: 18px; }
.alert-body { font-size: 14.4px; line-height: 18px; margin-top: 4px; }
.alert-body strong { font-weight: 600; }

.filters { height: 97px; margin-top: 19px; display: flex; align-items: flex-end; gap: 10px; padding: 0 16px 12px; border: 1px solid #e6eaf1; border-radius: 16px; background: #fff; }
.field { display: flex; flex-direction: column; gap: 10px; }
.f-mes { width: 144px; }
.f-ano { width: 112px; }
.f-busca { flex: 1; }
.f-label { height: 16px; display: flex; align-items: center; gap: 6px; font-size: 11.2px; font-weight: 600; letter-spacing: .5px; color: #6b7280; white-space: nowrap; }
.f-ico { width: 16px; height: 16px; color: #33241f; }
.aug { font-size: 5px; text-anchor: middle; fill: #6b5e5a; font-family: "Liberation Sans", sans-serif; }
.control { height: 42px; padding-bottom: 2px; display: flex; align-items: center; border: 1px solid #e8ebf0; border-radius: 10px; font-size: 14px; background: #fff; color: #374151; }
.select { background: #f3f6f9; padding-left: 14px; padding-right: 11px; justify-content: space-between; }
.sel-chev { width: 14px; height: 14px; margin-top: 2px; color: #374151; stroke: currentColor; stroke-width: 1; }
.year { padding-left: 16px; }
.placeholder { padding-left: 17px; font-style: italic; color: #94a3b8; }
.btn-update { width: 123px; height: 44px; padding-bottom: 2px; display: flex; align-items: center; justify-content: center; border-radius: 8px; background: #1a5c45; box-shadow: 0 4px 10px rgba(26,92,69,.25); font-size: 14px; font-weight: 600; color: #fff; }
.upd-ico { width: 14px; height: 14px; margin-right: 10px; color: #1f2f25; }

.stats { display: grid; grid-template-columns: repeat(4, minmax(0, 1fr)); gap: 12.8px; margin: 18px 0 0 1px; }
.stat { height: 72px; display: flex; align-items: center; gap: 14px; padding-left: 12px; border: 1px solid #e3e8ef; border-left-width: 4px; border-radius: 16px; background: #fff; }
.s-green { border-left-color: #1a6b50; }
.s-blue { border-left-color: #3b82f6; }
.s-mint { border-left-color: #10b981; }
.s-amber { border-left-color: #f59e0b; }
.stat-ico { width: 42px; height: 42px; border-radius: 12px; display: flex; align-items: center; justify-content: center; color: #1a1d21; }
.stat-ico svg { width: 16px; height: 16px; }
.s-green .stat-ico { background: #e1e9e6; }
.s-blue .stat-ico { background: #e5effe; }
.s-mint .stat-ico { background: #e1f6ef; }
.s-amber .stat-ico { background: #fef2e2; }
.stat-val { font-size: 24px; font-weight: 500; line-height: 28px; color: #16181b; }
.stat-lbl { font-size: 11.5px; font-weight: 500; letter-spacing: .5px; line-height: 16px; color: #71757e; }

.cards { display: grid; grid-template-columns: repeat(3, minmax(0, 1fr)); gap: 14.4px; margin-top: 16px; }
.card { height: 234px; padding: 13px 18px 14px; border: 1px solid #e5e9f0; border-top: 4px solid #e2e8f0; border-radius: 16px; background: #fff; display: flex; flex-direction: column; }
.card-head { height: 23px; display: flex; align-items: center; justify-content: space-between; gap: 10px; }
.card-title { flex: 1; min-width: 0; padding-bottom: 4px; font-size: 14px; font-weight: 600; letter-spacing: 0; color: #1c1f23; white-space: nowrap; }
.shift { flex: none; height: 23px; line-height: 21px; padding: 0 8px; border-radius: 12px; background: #e1eae6; font-size: 10.5px; font-weight: 500; letter-spacing: .75px; color: #1f5f4a; }
.card-course { height: 20px; display: flex; align-items: center; font-size: 12.5px; color: #71757e; }
.book { width: 24px; height: 20px; margin-right: 10px; color: #2c2f33; }
.card-teacher { height: 18px; margin-top: 17px; display: flex; align-items: center; font-size: 12.5px; color: #71757e; }
.tch { width: 14px; height: 16px; margin-right: 12px; color: #17191c; }
.freq { height: 18px; margin-top: 19px; display: flex; align-items: center; justify-content: space-between; }
.freq-lbl { font-size: 11.5px; font-weight: 600; letter-spacing: .45px; color: #797d86; }
.freq-val { margin-bottom: 3px; font-size: 16.5px; font-weight: 600; color: #8fa3c0; }
.bar { height: 8px; margin-top: 8px; border-radius: 4px; background: #f1f4f9; }
.bar-fill { width: 6px; height: 8px; border-radius: 4px; background: #d7e0ea; }
.card-foot { height: 57px; margin-top: 14px; padding-top: 12px; border-top: 1px solid #eef1f5; display: flex; align-items: center; font-size: 12.5px; color: #7c8088; }
.cf-ico { width: 16px; height: 16px; color: #2c2f33; }
.cf-num { margin: 0 13px 0 10px; }
.go { margin-left: auto; width: 44px; height: 44px; border-radius: 12px; background: #f3f5fa; display: flex; align-items: center; justify-content: center; }
.go-ico { width: 15px; height: 15px; color: #55595f; }

/* Footer */
.footer { position: relative; height: 60px; flex: none; display: flex; flex-direction: column; align-items: center; padding-top: 10px; background: linear-gradient(90deg, #12553f, #14604a 50%, #1a6a52); border-top: 1px solid #2a6e58; color: #d8e6e1; }
.foot-1 { display: flex; align-items: center; font-size: 12px; line-height: 16px; white-space: nowrap; }
.foot-1 strong { font-weight: 600; color: #fff; }
.foot-ico { width: 11px; height: 12px; margin-right: 8px; color: #d9ab1d; }
.foot-2 { display: flex; align-items: center; gap: 21px; margin: 4px 7px 0 0; font-size: 11px; line-height: 16px; white-space: nowrap; }
.copy { margin-right: -8px; }
.foot-2 a { color: #c9a326; }
.dot { width: 3px; height: 3px; border-radius: 50%; background: #b8cfc8; }
.version { font-family: "Liberation Mono", monospace; font-size: 11px; letter-spacing: .5px; color: #d9a520; }

/* Edge tab */
.edge-tab { position: absolute; left: 1396px; top: 417px; width: 44px; height: 66px; border-radius: 12px 0 0 12px; background: #7a9c90; display: flex; align-items: center; padding-left: 15px; }
.edge-chev { width: 14px; height: 14px; color: #6a8a80; }

/* Guided-tour highlights */
.hl { position: absolute; border: 5px solid #f4561d; border-radius: 14px; background: rgba(244,86,29,.15); }
.hl-alert { left: 332px; top: 222px; width: 1051px; height: 119px; }
.hl-filter { left: 335px; top: 352px; width: 1050px; height: 97px; }
.hl-live { left: 346px; top: 176px; width: 185px; height: 52px; border-radius: 12px; }
.pin { position: absolute; width: 51px; height: 51px; border-radius: 50%; border: 4px solid #fff; background: #f4561d; color: #fff; display: flex; align-items: center; justify-content: center; font-family: Roboto, "Liberation Sans", sans-serif; font-size: 30px; font-weight: 700; }
.pin-1 { left: 310px; top: 327px; }
.pin-2 { left: 307px; top: 197px; }
.pin-4 { left: 505px; top: 152px; }
```
